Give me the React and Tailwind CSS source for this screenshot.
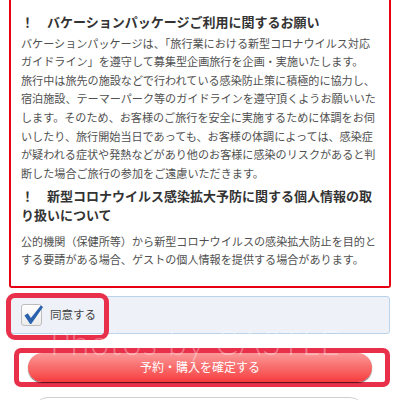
import React from "react";

const bodyLine = "block whitespace-nowrap text-[11.1px] leading-[18.6px] text-[#505050]";
const headLine = "block whitespace-nowrap text-[13px] leading-[19px] font-bold text-[#333]";

function Check() {
  return (
    <svg viewBox="0 0 22 22" className="absolute left-[1px] top-[-1px] w-[21px] h-[22px]">
      <path d="M1.5 11.5 L5 9.2 L8.3 14.2 L18.6 1 L21 2.6 L8.6 20.4 L7.4 20.4 Z" fill="#2a62ad" />
    </svg>
  );
}

export default function App() {
  return (
    <div className="relative w-[400px] h-[400px] overflow-hidden bg-white font-['Noto_Sans_CJK_JP','Noto_Sans',sans-serif]">
      {/* notice box */}
      <div className="ml-[9px] w-[382px] border-x-2 border-b-2 border-[#e60012] rounded-b-[3px] pl-[10px] pt-[11.5px] pb-[17px]">
        <h2 className={headLine}>！　バケーションパッケージご利用に関するお願い</h2>
        <div className="mt-[3.2px]">
          <span className={bodyLine}>バケーションパッケージは、「旅行業における新型コロナウイルス対応</span>
          <span className={bodyLine}>ガイドライン」を遵守して募集型企画旅行を企画・実施いたします。</span>
          <span className={bodyLine}>旅行中は旅先の施設などで行われている感染防止策に積極的に協力し、</span>
          <span className={bodyLine}>宿泊施設、テーマーパーク等のガイドラインを遵守頂くようお願いいた</span>
          <span className={bodyLine}>します。そのため、お客様のご旅行を安全に実施するために体調をお伺</span>
          <span className={bodyLine}>いしたり、旅行開始当日であっても、お客様の体調によっては、感染症</span>
          <span className={bodyLine}>が疑われる症状や発熱などがあり他のお客様に感染のリスクがあると判</span>
          <span className={bodyLine}>断した場合ご旅行の参加をご遠慮いただきます。</span>
        </div>
        <h2 className="mt-[4px]">
          <span className={headLine}>！　新型コロナウイルス感染拡大予防に関する個人情報の取</span>
          <span className={headLine}>り扱いについて</span>
        </h2>
        <div className="mt-[7.2px]">
          <span className={bodyLine}>公的機関（保健所等）から新型コロナウイルスの感染拡大防止を目的と</span>
          <span className={bodyLine}>する要請がある場合、ゲストの個人情報を提供する場合があります。</span>
        </div>
      </div>

      {/* agreement row */}
      <div className="relative mt-[8px] ml-[10px] w-[380px] h-[38px] border border-[#b9d3ea] bg-[#eef1f8] rounded-[3px] flex items-center pl-[10px] gap-[8px]">
        <div className="relative w-[21px] h-[22px] rounded-[3px] border border-[#bdbdbd] bg-linear-to-b from-white to-[#ececec]">
          <Check />
        </div>
        <span className="text-[11.5px] text-[#444]">同意する</span>
        <div className="absolute -left-[5px] -top-[4px] w-[103px] h-[47px] border-[5px] border-[#e8304a] rounded-[9px]" />
      </div>

      {/* confirm button */}
      <div className="mt-[14px] ml-[14px] w-[376px] h-[39px] border-[5px] border-[#e8304a] rounded-[7px] pl-[9px] pr-[13px]">
        <button className="w-full h-full rounded-full bg-linear-to-b from-[#fb9898] via-[#f86b6b] to-[#f7383e] shadow-[0_1px_1px_rgba(0,0,0,0.65)] flex items-center justify-center text-white text-[12px]">
          予約・購入を確定する
        </button>
      </div>

      {/* next button, mostly below the fold */}
      <div className="mt-[10px] ml-[33px] w-[332px] h-[30px] rounded-full border border-[#cfcfcf] bg-white" />

      {/* watermark */}
      <div className="pointer-events-none absolute left-[50px] top-[325px] whitespace-nowrap font-['Lato',sans-serif] font-light text-[34px] leading-none tracking-[1px] text-white/35">
        Photos by CASTLE
      </div>
    </div>
  );
}
